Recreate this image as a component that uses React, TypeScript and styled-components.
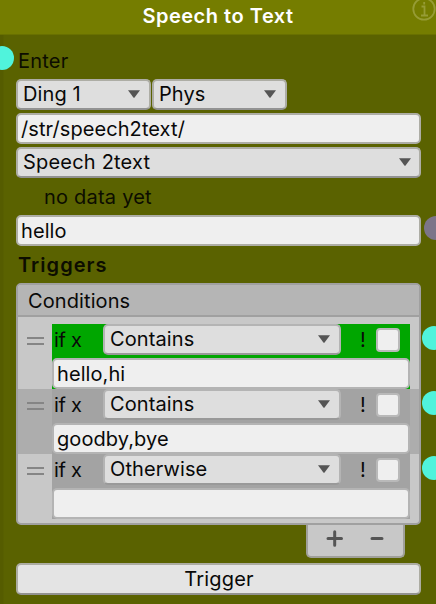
import React from "react";
import styled, { createGlobalStyle } from "styled-components";

const GlobalStyle = createGlobalStyle`
  * { box-sizing: border-box; }
  body { margin: 0; background: #5a6200; overflow: hidden; }
`;

const Node = styled.main`
  width: 436px;
  height: 604px;
  overflow: hidden;
  background: linear-gradient(90deg, #555c00 0, #555c00 3px, #5a6200 4px);
  color: #090909;
  font: 400 20px/24px Inter, sans-serif;
  letter-spacing: 0.1px;
  white-space: nowrap;
`;

const Header = styled.header`
  position: relative;
  height: 35px;
  padding-top: 4px;
  border-bottom: 1px solid #687000;
  background: #757d00;
  color: #fff;
  font-weight: 600;
  text-align: center;
  letter-spacing: 0.52px;
`;

const InfoIcon = styled.svg`
  position: absolute;
  top: -3px;
  right: 0;
`;

const Body = styled.div`
  display: flex;
  flex-direction: column;
  padding: 0 15px 0 16px;
`;

const Line = styled.div<{ $height: number; $indent: number; $top: number; $bold?: boolean }>`
  position: relative;
  height: ${(p) => p.$height}px;
  padding: ${(p) => p.$top}px 0 0 ${(p) => p.$indent}px;
  color: #0c0d00;
  font-weight: ${(p) => (p.$bold ? 600 : 400)};
  letter-spacing: ${(p) => (p.$bold ? 1.05 : 0.22)}px;
`;

const SelectRow = styled.div`
  display: flex;
  gap: 1px;
  margin-bottom: 3px;
`;

const Control = styled.div<{ $width?: number; $gap?: number }>`
  position: relative;
  display: flex;
  align-items: center;
  flex: none;
  width: ${(p) => (p.$width ? `${p.$width}px` : "100%")};
  height: 31px;
  margin-bottom: ${(p) => p.$gap ?? 0}px;
  padding: 0 10px 0 3px;
  border: 2px solid #adada5;
  border-radius: 5px;
  color: #090909;
`;

const Field = styled(Control)`
  background: #efefef;
  letter-spacing: 0.08px;
`;

const Dropdown = styled(Control)`
  justify-content: space-between;
  padding: 0 9px 2px 5px;
  border-bottom-color: #929292;
  background: #dedede;
`;

const WideDropdown = styled(Dropdown)`
  padding-right: 8px;
  letter-spacing: 0.2px;
`;

const Port = styled.span<{ $side: "left" | "right"; $top: number; $muted?: boolean }>`
  position: absolute;
  top: ${(p) => p.$top}px;
  ${(p) => (p.$side === "left" ? "left: -26px;" : p.$muted ? "right: -29px;" : "right: -26.5px;")}
  width: 24px;
  height: 24px;
  border-radius: 50%;
  background: ${(p) => (p.$muted ? "#7c7589" : "#50f3dc")};
`;

const Panel = styled.section`
  position: relative;
  height: 242px;
  border: 2px solid #a0a0a0;
  border-radius: 5px;
  background: #c8c8c8;
`;

const PanelTitle = styled.div`
  height: 32px;
  margin-bottom: 7px;
  padding: 4px 10px;
  border-bottom: 2px solid #a0a0a0;
  border-radius: 3px 3px 0 0;
  background: #b5b5b5;
`;

const Row = styled.div<{ $shade?: boolean }>`
  position: relative;
  display: flex;
  height: 65px;
  padding: 0 9px 0 9px;
  background: ${(p) => (p.$shade ? "#adadad" : "#c8c8c8")};
`;

const Handle = styled.span`
  width: 17px;
  height: 8px;
  margin: 13px 8px 0 0;
  border-top: 2px solid #858585;
  border-bottom: 2px solid #858585;
`;

const Rule = styled.div<{ $active?: boolean }>`
  width: 358px;
  background: ${(p) => (p.$active ? "#00a600" : "#a3a3a3")};
`;

const RuleTop = styled.div`
  display: flex;
  height: 34px;
`;

const Prefix = styled.span`
  width: 51px;
  padding: 4px 0 0 2px;
  letter-spacing: -0.3px;
`;

const RuleSelect = styled(Dropdown)`
  border-color: #b4b4b4;
  border-bottom-color: #999;
`;

const RuleField = styled(Field)`
  border-color: #b4b4b4;
`;

const Negate = styled.span`
  width: 35px;
  padding: 4px 0 0 19px;
`;

const Check = styled.span`
  width: 24px;
  height: 24px;
  margin-top: 4px;
  border: 2px solid #b9b9b9;
  border-radius: 4px;
  background: #efefef;
`;

const Tools = styled.div`
  position: relative;
  display: flex;
  align-self: flex-end;
  width: 99px;
  height: 34px;
  margin: -1px 16px 5px 0;
  border: 2px solid #a0a09a;
  border-top: 1px solid #a0a0a0;
  border-radius: 0 0 5px 5px;
  background: #c8c8c8;
`;

const Button = styled.button`
  height: 32px;
  padding: 0 0 0 1px;
  border: 2px solid #acaca2;
  border-bottom-color: #929290;
  border-radius: 5px;
  background: #e4e4e4;
  color: #090909;
  font: inherit;
  letter-spacing: 0.2px;
`;

const Arrow = () => (
  <svg width="12" height="8" viewBox="0 0 12 8">
    <path d="M0 .3h12L6.6 7.4q-.6.6-1.2 0Z" fill="#555" />
  </svg>
);

const rules = [
  { kind: "Contains", value: "hello,hi", active: true },
  { kind: "Contains", value: "goodby,bye", shade: true },
  { kind: "Otherwise", value: "" },
];

export default function App() {
  return (
    <>
      <GlobalStyle />
      <Node>
        <Header>
          Speech to Text
          <InfoIcon width="24" height="24" viewBox="0 0 24 24" fill="none" stroke="#969c35" strokeWidth="1.8">
            <circle cx="12" cy="12" r="10.7" />
            <path d="M9.5 9.5h3v8M9 18.5h7M12.2 5v2.5" />
          </InfoIcon>
        </Header>
        <Body>
          <Line $height={44} $indent={2} $top={14}>
            <Port $side="left" $top={11} />
            Enter
          </Line>
          <SelectRow>
            <Dropdown $width={135}>Ding 1<Arrow /></Dropdown>
            <Dropdown $width={135}>Phys<Arrow /></Dropdown>
          </SelectRow>
          <Field $gap={3}>/str/speech2text/</Field>
          <WideDropdown>Speech 2text<Arrow /></WideDropdown>
          <Line $height={37} $indent={28} $top={7}>no data yet</Line>
          <Field>
            hello
            <Port $side="right" $top={-1} $muted />
          </Field>
          <Line $height={37} $indent={2} $top={7} $bold>Triggers</Line>
          <Panel>
            <PanelTitle>Conditions</PanelTitle>
            {rules.map((rule, i) => (
              <Row key={i} $shade={rule.shade}>
                <Handle />
                <Rule $active={rule.active}>
                  <RuleTop>
                    <Prefix>if x</Prefix>
                    <RuleSelect $width={238}>{rule.kind}<Arrow /></RuleSelect>
                    <Negate>!</Negate>
                    <Check />
                  </RuleTop>
                  <RuleField>{rule.value}</RuleField>
                </Rule>
                <Port $side="right" $top={2} />
              </Row>
            ))}
          </Panel>
          <Tools>
            <svg width="95" height="31" viewBox="0 0 95 31" stroke="#555" strokeWidth="3" strokeLinecap="round">
              <path d="M20 13.5h13.5M26.7 6.8v13.5M64 13.5h10" />
            </svg>
          </Tools>
          <Button>Trigger</Button>
        </Body>
      </Node>
    </>
  );
}
